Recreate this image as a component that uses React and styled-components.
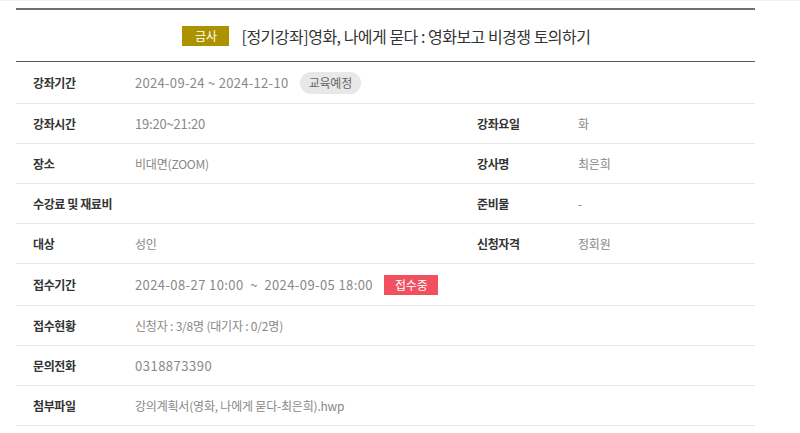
import React from 'react';
import styled, { createGlobalStyle } from 'styled-components';

const GlobalStyle = createGlobalStyle`
  html, body {
    margin: 0;
    padding: 0;
    background: #fff;
  }
  body {
    font-family: "Noto Sans CJK KR", "Noto Sans", sans-serif;
    border-top: 1px solid #f2f2f2;
  }
`;

const Wrap = styled.section`
  width: 739px;
  margin: 7px 0 0 16px;
  border-top: 2px solid #6f6f6f;
`;

const Header = styled.div`
  height: 51px;
  display: flex;
  align-items: center;
  justify-content: center;
  gap: 12px;
  border-bottom: 1px solid #5c5c5c;
  padding-left: 2px;
`;

const Category = styled.span`
  display: inline-flex;
  align-items: center;
  justify-content: center;
  width: 47px;
  height: 20px;
  background: #ad9200;
  color: #fff;
  font-size: 12px;
`;

const Title = styled.h2`
  margin: 0;
  font-size: 16px;
  font-weight: 400;
  color: #333;
  letter-spacing: -0.5px;
`;

const Row = styled.div`
  display: grid;
  grid-template-columns: 119px 325px 118px 1fr;
  align-items: center;
  min-height: ${({ tall }) => (tall ? '42px' : '40px')};
  box-sizing: border-box;
  border-bottom: 1px solid #e6e6e6;
`;

const Label = styled.div`
  padding-left: 17px;
  font-size: 12px;
  font-weight: 700;
  color: #333;
  letter-spacing: -0.4px;
`;

const Value = styled.div`
  grid-column: ${({ wide }) => (wide ? 'span 3' : 'auto')};
  display: flex;
  align-items: center;
  gap: 8px;
  font-size: ${({ big }) => (big ? '13px' : '12px')};
  color: #888;
  letter-spacing: ${({ spread }) => spread || '-0.2px'};
  white-space: pre;
`;

const Pill = styled.span`
  display: inline-flex;
  align-items: center;
  height: 22px;
  padding: 0 9px;
  border-radius: 11px;
  background: #e8e8e8;
  color: #666;
  font-size: 12px;
  letter-spacing: -0.2px;
`;

const Status = styled.span`
  display: inline-flex;
  align-items: center;
  justify-content: center;
  width: 54px;
  height: 20px;
  background: #f0505f;
  color: #fff;
  font-size: 12px;
  letter-spacing: -0.2px;
`;

export default function App() {
  return (
    <>
      <GlobalStyle />
      <Wrap>
        <Header>
          <Category>금사</Category>
          <Title>[정기강좌]영화, 나에게 묻다 : 영화보고 비경쟁 토의하기</Title>
        </Header>
        <Row tall>
          <Label>강좌기간</Label>
          <Value wide big spread="0.3px">
            2024-09-24 ~ 2024-12-10 <Pill>교육예정</Pill>
          </Value>
        </Row>
        <Row>
          <Label>강좌시간</Label>
          <Value big>19:20~21:20</Value>
          <Label>강좌요일</Label>
          <Value>화</Value>
        </Row>
        <Row>
          <Label>장소</Label>
          <Value>비대면(ZOOM)</Value>
          <Label>강사명</Label>
          <Value>최은희</Value>
        </Row>
        <Row>
          <Label>수강료 및 재료비</Label>
          <Value></Value>
          <Label>준비물</Label>
          <Value>-</Value>
        </Row>
        <Row>
          <Label>대상</Label>
          <Value>성인</Value>
          <Label>신청자격</Label>
          <Value>정회원</Value>
        </Row>
        <Row tall>
          <Label>접수기간</Label>
          <Value wide big spread="0.4px">
            2024-08-27 10:00  ~  2024-09-05 18:00 <Status>접수중</Status>
          </Value>
        </Row>
        <Row>
          <Label>접수현황</Label>
          <Value wide>신청자 : 3/8명 (대기자 : 0/2명)</Value>
        </Row>
        <Row>
          <Label>문의전화</Label>
          <Value wide big spread="0.5px">0318873390</Value>
        </Row>
        <Row>
          <Label>첨부파일</Label>
          <Value wide>강의계획서(영화, 나에게 묻다-최은희).hwp</Value>
        </Row>
      </Wrap>
    </>
  );
}
